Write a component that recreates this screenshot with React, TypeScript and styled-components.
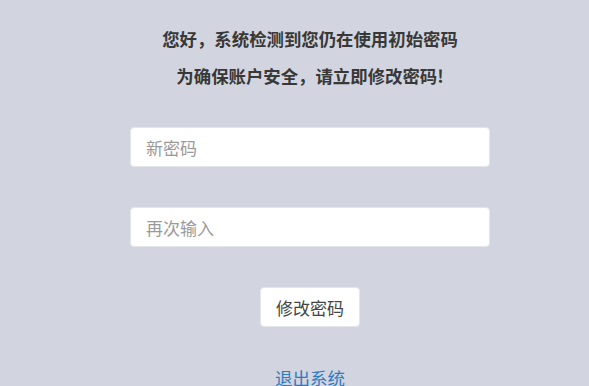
import React, { Component } from 'react';
import styled, { createGlobalStyle } from 'styled-components';

const GlobalStyle = createGlobalStyle`
  html, body {
    margin: 0;
    padding: 0;
    background: #d2d5df;
    font-family: "Noto Sans CJK SC", "Noto Sans", sans-serif;
  }
`;

export default class App extends Component<any, any> {
  constructor(props: any) {
    super(props);
    this.state = {
      password: '',
      confirm: ''
    };
  }

  render() {
    const {password, confirm} = this.state;
    return (
      <>
        <GlobalStyle />
        <Page>
          <Notice>
            <div>您好，系统检测到您仍在使用初始密码</div>
            <div>为确保账户安全，请立即修改密码!</div>
          </Notice>
          <Field
            type="password"
            placeholder="新密码"
            value={password}
            onChange={(e) => this.setState({password: e.target.value})}
          />
          <Field
            type="password"
            placeholder="再次输入"
            value={confirm}
            onChange={(e) => this.setState({confirm: e.target.value})}
          />
          <SubmitButton>修改密码</SubmitButton>
          <LogoutLink href="#">退出系统</LogoutLink>
        </Page>
      </>
    );
  }
}

const Page = styled.div`
  width: 360px;
  margin-left: 130px;
  padding-top: 20px;
  display: flex;
  flex-direction: column;
  align-items: center;
`;

const Notice = styled.div`
  font-size: 17.4px;
  font-weight: 700;
  line-height: 37px;
  color: #383838;
  text-align: center;
  margin-bottom: 33px;
`;

const Field = styled.input`
  box-sizing: border-box;
  width: 360px;
  height: 40px;
  margin-bottom: 40px;
  padding: 0 15px;
  border: 1px solid #e4e6ec;
  border-radius: 4px;
  background: #fff;
  font-family: inherit;
  font-size: 17px;
  color: #333;
  outline: none;

  &::placeholder {
    color: #9a9a9a;
  }
`;

const SubmitButton = styled.button`
  box-sizing: border-box;
  width: 100px;
  height: 40px;
  padding: 0;
  border: 1px solid #e4e6ec;
  border-radius: 4px;
  background: #fff;
  font-family: inherit;
  font-size: 17px;
  color: #444;
  cursor: pointer;
`;

const LogoutLink = styled.a`
  margin-top: 41px;
  font-size: 17.5px;
  line-height: 20px;
  color: #2f7bbf;
  text-decoration: none;
`;
